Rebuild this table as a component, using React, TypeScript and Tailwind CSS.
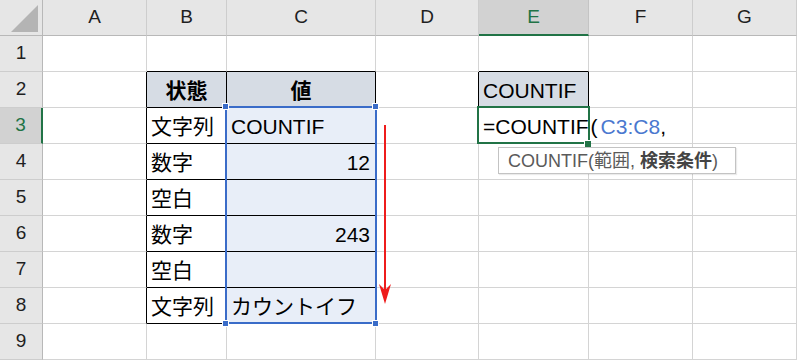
import React from "react";

const COLS = ["A", "B", "C", "D", "E", "F", "G"];
const ROWS = [1, 2, 3, 4, 5, 6, 7, 8, 9];

type Content = { text: React.ReactNode; align?: "left" | "right" | "center"; bold?: boolean };

const DATA: Record<string, Content> = {
  B2: { text: "状態", align: "center", bold: true },
  C2: { text: "値", align: "center", bold: true },
  B3: { text: "文字列" },
  C3: { text: "COUNTIF" },
  B4: { text: "数字" },
  C4: { text: "12", align: "right" },
  B5: { text: "空白" },
  B6: { text: "数字" },
  C6: { text: "243", align: "right" },
  B7: { text: "空白" },
  B8: { text: "文字列" },
  C8: { text: "カウントイフ" },
  E2: { text: "COUNTIF" },
};

function cellRightColor(c: string, r: number): string {
  const inTable = r >= 2 && r <= 8;
  if (inTable && (c === "A" || c === "B" || c === "C")) return "border-r-black";
  if (r === 2 && (c === "D" || c === "E")) return "border-r-black";
  return "border-r-[#d4d4d4]";
}

function cellBottomColor(c: string, r: number): string {
  if (r === 1 && (c === "B" || c === "C" || c === "E")) return "border-b-black";
  if (r >= 2 && r <= 8 && (c === "B" || c === "C")) return "border-b-black";
  if (r === 2 && c === "E") return "border-b-black";
  return "border-b-[#d4d4d4]";
}

function cellBg(c: string, r: number): string {
  if (r === 2 && (c === "B" || c === "C" || c === "E")) return "bg-[#d6dce4]";
  if (c === "C" && r >= 3 && r <= 8) return "bg-[#e8eef8]";
  return "";
}

function DataCell({ c, r }: { c: string; r: number }) {
  const key = `${c}${r}`;
  const d = DATA[key];
  const justify =
    d?.align === "right" ? "justify-end pr-[5px]" : d?.align === "center" ? "justify-center" : "justify-start pl-[4px]";
  const isE3 = key === "E3";
  return (
    <div
      className={`flex items-center border-r border-b ${cellRightColor(c, r)} ${cellBottomColor(c, r)} ${cellBg(c, r)} ${justify} ${
        isE3 ? "relative z-10 overflow-visible whitespace-nowrap pl-[4px]" : "overflow-hidden whitespace-nowrap"
      } text-[21px] leading-none text-black ${d?.bold ? "font-bold" : ""}`}
    >
      {d ? <span className="pt-[1px]">{d.text}</span> : null}
      {isE3 ? (
        <span className="pt-[1px]">
          =COUNTIF<span className="ml-[2px] mr-[3px]">(</span>
          <span className="text-[#4a78cf]">C3:C8</span>,
        </span>
      ) : null}
    </div>
  );
}

export default function App() {
  return (
    <div className="relative w-[797px] h-[360px] overflow-hidden bg-white font-['Liberation_Sans','Noto_Sans_CJK_JP',sans-serif]">
      <div className="grid grid-cols-[43px_104px_80px_149px_103px_110px_104px_104px] grid-rows-[repeat(10,36px)]">
        {/* corner */}
        <div className="bg-[#e6e6e6] border-r border-b border-r-[#b8b8b8] border-b-[#b8b8b8]">
          <svg width="42" height="35" viewBox="0 0 42 35">
            <polygon points="11,32 38,32 38,5" fill="#b4b4b4" />
          </svg>
        </div>
        {COLS.map((c) =>
          c === "E" ? (
            <div
              key={c}
              className="flex items-center justify-center bg-[#d2d2d2] border-r border-b-2 border-r-[#c4c4c4] border-b-[#217346] text-[19px] text-[#217346]"
            >
              {c}
            </div>
          ) : (
            <div
              key={c}
              className="flex items-center justify-center bg-[#e6e6e6] border-r border-b border-r-[#cdcdcd] border-b-[#b8b8b8] text-[19px] text-[#1f1f1f]"
            >
              {c}
            </div>
          )
        )}
        {ROWS.map((r) => (
          <React.Fragment key={r}>
            {r === 3 ? (
              <div className="flex items-center justify-center bg-[#d2d2d2] border-r-2 border-b border-r-[#217346] border-b-[#cdcdcd] text-[19px] text-[#217346]">
                {r}
              </div>
            ) : (
              <div className="flex items-center justify-center bg-[#e6e6e6] border-r border-b border-r-[#b8b8b8] border-b-[#cdcdcd] text-[19px] text-[#1f1f1f]">
                {r}
              </div>
            )}
            {COLS.map((c) => (
              <DataCell key={c} c={c} r={r} />
            ))}
          </React.Fragment>
        ))}
      </div>

      {/* range reference selection C3:C8 */}
      <div className="pointer-events-none absolute left-[225px] top-[106px] w-[152px] h-[218px] border-2 border-[#3a6cc8]" />
      <div className="absolute left-[222px] top-[103px] w-[7px] h-[7px] bg-[#3a6cc8] border border-white" />
      <div className="absolute left-[372px] top-[103px] w-[7px] h-[7px] bg-[#3a6cc8] border border-white" />
      <div className="absolute left-[222px] top-[320px] w-[7px] h-[7px] bg-[#3a6cc8] border border-white" />
      <div className="absolute left-[372px] top-[320px] w-[7px] h-[7px] bg-[#3a6cc8] border border-white" />

      {/* red arrow */}
      <svg className="absolute left-[375px] top-[120px]" width="20" height="190" viewBox="0 0 20 190">
        <line x1="10" y1="5" x2="10" y2="170" stroke="#ee1c1c" strokeWidth="2" />
        <polygon points="4,164 10,184 16,164 10,170" fill="#ee1c1c" />
      </svg>

      {/* active cell E3 */}
      <div className="pointer-events-none absolute left-[477px] top-[106px] w-[113px] h-[38px] border-2 border-[#217346] z-20" />
      <div className="absolute left-[584px] top-[140px] w-[7px] h-[7px] bg-[#217346] border-l border-t border-white z-20" />

      {/* function tooltip */}
      <div className="absolute left-[498px] top-[147px] w-[238px] h-[27px] bg-white border border-[#c3c3c3] shadow-[1px_1px_1px_rgba(0,0,0,0.08)] z-30 flex items-center pl-[9px] text-[18px] leading-none text-[#5a5a5a] whitespace-nowrap">
        <span>
          COUNTIF(範囲, <span className="font-bold text-[#444444]">検索条件</span>)
        </span>
      </div>
    </div>
  );
}
